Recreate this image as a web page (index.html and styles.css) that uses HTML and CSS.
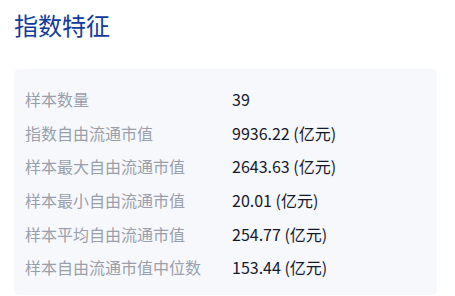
FILE: index.html
```html
<!DOCTYPE html>
<html lang="zh">
<head>
<meta charset="utf-8">
<link rel="stylesheet" href="styles.css">
</head>
<body>
<div class="page">
  <h1 class="title">指数特征</h1>
  <div class="card">
    <div class="row"><span class="label">样本数量</span><span class="value">39</span></div>
    <div class="row"><span class="label">指数自由流通市值</span><span class="value">9936.22 (亿元)</span></div>
    <div class="row"><span class="label">样本最大自由流通市值</span><span class="value">2643.63 (亿元)</span></div>
    <div class="row"><span class="label">样本最小自由流通市值</span><span class="value">20.01 (亿元)</span></div>
    <div class="row"><span class="label">样本平均自由流通市值</span><span class="value">254.77 (亿元)</span></div>
    <div class="row"><span class="label">样本自由流通市值中位数</span><span class="value">153.44 (亿元)</span></div>
  </div>
</div>
</body>
</html>
```

FILE: styles.css
```css
html, body {
  margin: 0;
  padding: 0;
  background: #ffffff;
}
.page {
  padding: 8px 18px 0 14px;
  font-family: "Noto Sans CJK SC", "Noto Sans", sans-serif;
}
.title {
  margin: 0;
  font-size: 24px;
  font-weight: 400;
  line-height: 34px;
  color: #123a9c;
}
.card {
  margin-top: 27px;
  background: #f6f8fc;
  border-radius: 5px;
  padding: 13px 11px 10px 11px;
  height: 226px;
  box-sizing: border-box;
}
.row {
  display: grid;
  grid-template-columns: 207px 1fr;
  height: 33.7px;
  align-items: center;
  font-size: 16px;
  line-height: 24px;
}
.label {
  color: #9a9fab;
}
.value {
  color: #15182b;
}
```
